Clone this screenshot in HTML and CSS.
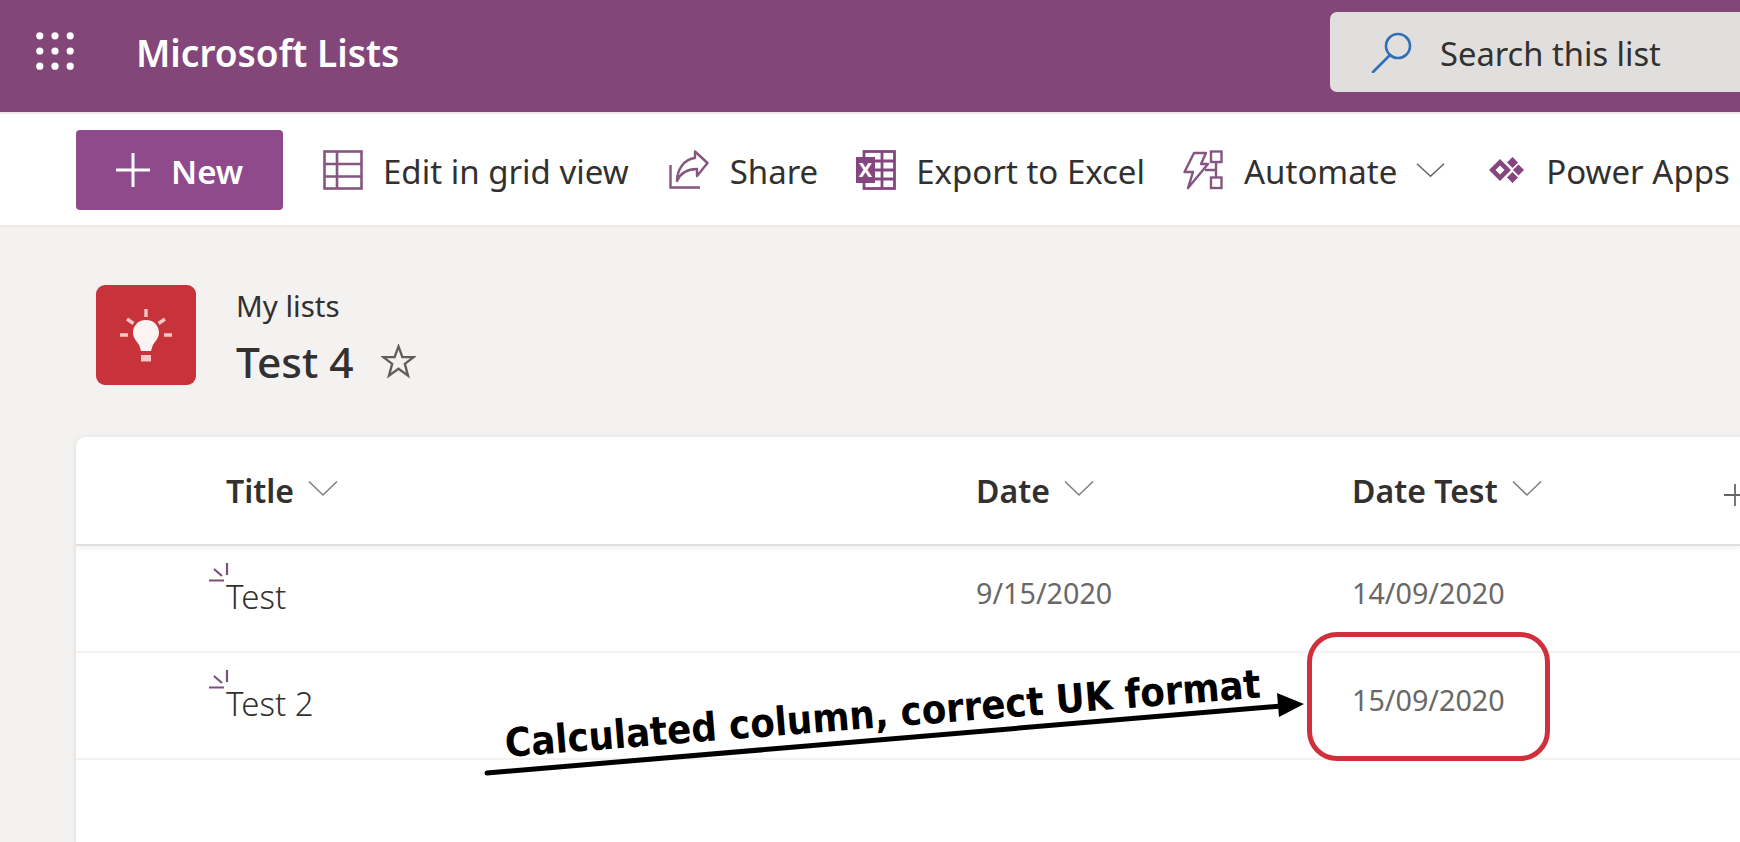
FILE: index.html
```html
<!DOCTYPE html>
<html lang="en">
<head>
    <meta charset="UTF-8">
    <meta name="viewport" content="width=device-width, initial-scale=1.0">
    <title>Microsoft Lists</title>
    <link rel="stylesheet" href="styles.css">
</head>
<body>

<!-- Top bar -->
<div class="topbar">
    <svg class="waffle" width="38" height="38" viewBox="0 0 40 40" fill="#fff">
        <circle cx="4" cy="4" r="3.800"/><circle cx="20" cy="4" r="3.800"/><circle cx="36" cy="4" r="3.800"/>
        <circle cx="4" cy="20" r="3.800"/><circle cx="20" cy="20" r="3.800"/><circle cx="36" cy="20" r="3.800"/>
        <circle cx="4" cy="36" r="3.800"/><circle cx="20" cy="36" r="3.800"/><circle cx="36" cy="36" r="3.800"/>
    </svg>
    <div class="app-name">Microsoft Lists</div>
    <div class="search">
        <svg width="44" height="42" viewBox="0 0 44 42" fill="none" stroke="#2f6fb5" stroke-width="2.600">
            <circle cx="28" cy="15" r="12"/>
            <path d="M20 24 L3 41" stroke-linecap="round"/>
        </svg>
        <span>Search this list</span>
    </div>
</div>

<!-- Command bar -->
<div class="toolbar">
    <div class="new-btn">
        <svg width="36" height="36" viewBox="0 0 36 36" stroke="#fff" stroke-width="3"><path d="M18 1V35M1 18H35"/></svg>
        <span>New</span>
    </div>
    <div class="cmd cmd-grid">
        <svg width="40" height="40" viewBox="0 0 40 40" fill="none" stroke="#85567f" stroke-width="2.600">
            <rect x="1.500" y="1.500" width="37" height="37"/>
            <path d="M1.500 14H38.500M1.500 26.500H38.500M14 1.500V38.500"/>
        </svg>
        <span>Edit in grid view</span>
    </div>
    <div class="cmd cmd-share">
        <svg width="40" height="40" viewBox="0 0 40 40" fill="none" stroke="#85567f" stroke-width="2.400">
            <path d="M1.500 15V37.500H31"/>
            <path d="M26 1.500L38.500 13L28 26V19C20 19 12 22 8 31C8 20 15 9 26 8Z" stroke-linejoin="round"/>
        </svg>
        <span>Share</span>
    </div>
    <div class="cmd cmd-excel">
        <svg width="40" height="40" viewBox="0 0 40 40">
            <rect x="8" y="1.500" width="30.500" height="37" fill="#fff" stroke="#85467f" stroke-width="2.800"/>
            <path d="M18 11H38M18 20H38M18 29H38M26 1.500V38.500" stroke="#85467f" stroke-width="2.800" fill="none"/>
            <rect x="0" y="7" width="19" height="26" fill="#85467f"/>
            <text class="xl-mark" x="9.500" y="27" text-anchor="middle">X</text>
        </svg>
        <span>Export to Excel</span>
    </div>
    <div class="cmd cmd-auto">
        <svg width="40" height="40" viewBox="0 0 40 40" fill="none" stroke="#85567f" stroke-width="2.400">
            <path d="M11 3H23L18 14H25L5 38L10 22H1.500Z" stroke-linejoin="round"/>
            <rect x="28" y="1.500" width="10.500" height="10.500"/>
            <rect x="28" y="27.500" width="10.500" height="10.500"/>
            <path d="M33 12V27.500M22 20H33"/>
        </svg>
        <span>Automate</span>
        <svg class="caret" width="29" height="16" viewBox="0 0 30 16" fill="none" stroke="#666" stroke-width="1.600"><path d="M1 1.500L15 14.500L29 1.500"/></svg>
    </div>
    <div class="cmd cmd-apps">
        <svg width="36" height="26" viewBox="0 0 36 26" fill="#85467f">
            <path d="M12 2L23 13L12 24L1 13ZM12 8.500L7.500 13L12 17.500L16.500 13Z" fill-rule="evenodd"/>
            <path d="M24.500 0L30 5.500L24.500 11L19 5.500Z"/>
            <path d="M24.500 15L30 20.500L24.500 26L19 20.500Z"/>
            <path d="M30.500 7.500L36 13L30.500 18.500L25 13Z"/>
        </svg>
        <span>Power Apps</span>
    </div>
</div>

<!-- List title -->
<div class="list-head">
    <div class="list-icon">
        <svg width="54" height="54" viewBox="0 0 54 54">
            <path d="M27 1V9M8 11L14.500 15.500M46 11L39.500 15.500M1 27H9M45 27H53" stroke="#f6c5c5" stroke-width="3.400" fill="none"/>
            <path d="M27 12C18.500 12 14 18.500 14 24.500C14 31 19 34 20.500 38L22 43H32L33.500 38C35 34 40 31 40 24.500C40 18.500 35.500 12 27 12Z" fill="#fdf3f3"/>
            <rect x="22" y="47" width="10" height="6.500" fill="#f6c5c5"/>
        </svg>
    </div>
    <div class="list-titles">
        <div class="crumb">My lists</div>
        <div class="list-name">
            <span>Test 4</span>
            <svg width="35" height="35" viewBox="0 0 36 36" fill="none" stroke="#605e5c" stroke-width="2.400"><path d="M18 2.500L22 13.500H33.500L24.500 20.500L27.800 32.500L18 25.500L8.200 32.500L11.500 20.500L2.500 13.500H14Z"/></svg>
        </div>
    </div>
</div>

<!-- List -->
<div class="card">
    <div class="row head">
        <div class="cell">Title <svg width="30" height="17" viewBox="0 0 30 17" fill="none" stroke="#808080" stroke-width="1.600"><path d="M1 1.500L15 15L29 1.500"/></svg></div>
        <div class="cell">Date <svg width="30" height="17" viewBox="0 0 30 17" fill="none" stroke="#808080" stroke-width="1.600"><path d="M1 1.500L15 15L29 1.500"/></svg></div>
        <div class="cell">Date Test <svg width="30" height="17" viewBox="0 0 30 17" fill="none" stroke="#808080" stroke-width="1.600"><path d="M1 1.500L15 15L29 1.500"/></svg></div>
        <div class="cell"><svg class="add-col" width="22" height="22" viewBox="0 0 22 22" stroke="#666" stroke-width="1.800"><path d="M11 0V22M0 11H22"/></svg></div>
    </div>
    <div class="row item">
        <div class="cell title">
            <svg class="sparkle" width="20" height="22" viewBox="0 0 20 22" stroke="#7d4f7e" stroke-width="2.200"><path d="M18 1V13M5 7L13 14M0 18.500H15"/></svg>
            Test
        </div>
        <div class="cell date">9/15/2020</div>
        <div class="cell date">14/09/2020</div>
    </div>
    <div class="row item">
        <div class="cell title">
            <svg class="sparkle" width="20" height="22" viewBox="0 0 20 22" stroke="#7d4f7e" stroke-width="2.200"><path d="M18 1V13M5 7L13 14M0 18.500H15"/></svg>
            Test 2
        </div>
        <div class="cell"></div>
        <div class="cell date">15/09/2020</div>
    </div>
</div>

<!-- Annotation drawn on top of the screenshot -->
<div class="callout-box"></div>
<svg class="callout-arrow" width="860" height="90" viewBox="0 0 860 90">
    <path d="M3 81L797 14" stroke="#000" stroke-width="5" stroke-linecap="round"/>
    <path d="M820 12L793 1L795 25Z" fill="#000"/>
</svg>
<div class="callout-text">Calculated column, correct UK format</div>

</body>
</html>
```

FILE: styles.css
```css
body {
    font-family: "Noto Sans", Arial, sans-serif;
    margin: 0;
    padding: 0;
    width: 1740px;
    height: 842px;
    overflow: hidden;
    position: relative;
    background-color: #f3f2f1;
    color: #323130;
}
.topbar {
    height: 104px;
    padding-bottom: 8px;
    background-color: #834679;
    display: flex;
    align-items: center;
    border-bottom: 2px solid #efe8ee;
}
.waffle {
    margin-left: 36px;
    margin-top: -2px;
}
.app-name {
    margin-left: 62px;
    color: white;
    font-size: 37px;
    font-weight: 600;
    flex: 1;
}
.search {
    width: 410px;
    height: 80px;
    background-color: #e1dfdd;
    border-radius: 7px 0 0 7px;
    display: flex;
    align-items: center;
    padding-left: 40px;
    gap: 26px;
    font-size: 32.700px;
    box-sizing: border-box;
}
.search span {
    margin-top: 2px;
}
.toolbar {
    height: 111px;
    background-color: white;
    border-bottom: 2px solid #edebe9;
    display: flex;
    align-items: center;
    padding-left: 76px;
    white-space: nowrap;
}
.new-btn {
    width: 207px;
    height: 80px;
    background-color: #8f4a8c;
    border-radius: 4px;
    color: white;
    font-size: 33px;
    font-weight: 600;
    display: flex;
    align-items: center;
    padding-left: 39px;
    gap: 20px;
    box-sizing: border-box;
}
.cmd {
    display: flex;
    align-items: center;
    gap: 20px;
    font-size: 33px;
}
.cmd span, .new-btn span {
    margin-top: 3px;
}
.cmd-grid { margin-left: 40px; }
.cmd-share { margin-left: 40px; gap: 21px; }
.cmd-excel { margin-left: 38px; gap: 20px; }
.cmd-auto { margin-left: 38px; gap: 21px; }
.cmd-apps { margin-left: 43px; gap: 22px; }
.caret { margin-left: -2px; }
.xl-mark {
    font-size: 20px;
    font-weight: 700;
    fill: white;
}
.list-head {
    display: flex;
    padding: 58px 0 0 96px;
    height: 210px;
    box-sizing: border-box;
    gap: 40px;
}
.list-icon {
    width: 100px;
    height: 100px;
    background-color: #c8323a;
    border-radius: 9px;
    display: flex;
    align-items: center;
    justify-content: center;
}
.crumb {
    font-size: 29.500px;
    line-height: 42px;
}
.list-name {
    font-size: 42.500px;
    font-weight: 500;
    line-height: 69px;
    display: flex;
    align-items: center;
    gap: 27px;
}
.card {
    margin-left: 76px;
    height: 405px;
    background-color: white;
    border-radius: 9px 0 0 0;
    box-shadow: 0 1px 5px rgba(0, 0, 0, 0.12);
    overflow: hidden;
}
.row {
    display: grid;
    grid-template-columns: 900px 376px 372px 1fr;
    align-items: center;
}
.row .cell:first-child {
    padding-left: 150px;
}
.head {
    height: 109px;
    font-size: 32px;
    font-weight: 600;
    border-bottom: 2px solid #e1dfdd;
    box-shadow: 0 3px 5px rgba(0, 0, 0, 0.05);
    box-sizing: border-box;
}
.head svg {
    margin-left: 6px;
    vertical-align: 6px;
}
.head .add-col {
    margin-left: 0;
    vertical-align: -3px;
}
.item {
    height: 107px;
    border-bottom: 2px solid #f3f2f1;
    box-sizing: border-box;
}
.row .title {
    font-size: 33px;
    font-weight: 300;
    padding-left: 149px;
    padding-bottom: 4px;
    position: relative;
}
.sparkle {
    position: absolute;
    left: 133px;
    top: -12px;
}
.date {
    font-size: 28.700px;
    color: #6a6866;
    padding-bottom: 12px;
}
.callout-box {
    position: absolute;
    left: 1307px;
    top: 632px;
    width: 243px;
    height: 129px;
    box-sizing: border-box;
    border: 5px solid #d22f3c;
    border-radius: 30px;
}
.callout-arrow {
    position: absolute;
    left: 484px;
    top: 692px;
}
.callout-text {
    position: absolute;
    left: 505px;
    top: 720px;
    font-family: "DejaVu Sans Condensed", "DejaVu Sans", sans-serif;
    font-stretch: condensed;
    font-size: 39.700px;
    font-weight: 700;
    color: black;
    white-space: nowrap;
    transform: rotate(-4.500deg);
    transform-origin: left center;
}
```
